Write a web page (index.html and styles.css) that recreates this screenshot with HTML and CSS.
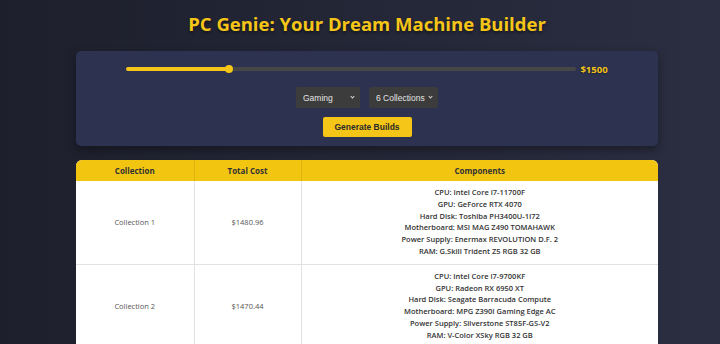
FILE: index.html
```html
<!DOCTYPE html>
<html lang="en">
<head>
  <meta charset="UTF-8">
  <title>PC Genie</title>
  <link rel="stylesheet" href="styles.css">
</head>
<body>

  <div class="wrap">
    <h1>PC Genie: Your Dream Machine Builder</h1>

    <div class="panel">
      <div class="budget-row">
        <input type="range" id="budget" min="500" max="5000" step="10" value="1500" style="background: linear-gradient(to right, #f5c518 22.8%, #474747 22.8%);">
        <span class="budget-value">$1500</span>
      </div>

      <div class="select-row">
        <label class="pick-box pick-purpose">
          <select id="purpose" class="pick">
            <option>Gaming</option>
            <option>Office</option>
            <option>Editing</option>
          </select>
        </label>
        <label class="pick-box pick-count">
          <select id="count" class="pick">
            <option>6 Collections</option>
            <option>3 Collections</option>
          </select>
        </label>
      </div>

      <button type="button" class="generate-btn">Generate Builds</button>
    </div>

    <table class="builds">
      <colgroup>
        <col class="col-name">
        <col class="col-cost">
        <col>
      </colgroup>
      <thead>
        <tr>
          <th>Collection</th>
          <th>Total Cost</th>
          <th>Components</th>
        </tr>
      </thead>
      <tbody>
        <tr>
          <td>Collection 1</td>
          <td>$1480.96</td>
          <td class="parts">
            <div>CPU: Intel Core i7-11700F</div>
            <div>GPU: GeForce RTX 4070</div>
            <div>Hard Disk: Toshiba PH3400U-1I72</div>
            <div>Motherboard: MSI MAG Z490 TOMAHAWK</div>
            <div>Power Supply: Enermax REVOLUTION D.F. 2</div>
            <div>RAM: G.Skill Trident Z5 RGB 32 GB</div>
          </td>
        </tr>
        <tr>
          <td>Collection 2</td>
          <td>$1470.44</td>
          <td class="parts">
            <div>CPU: Intel Core i7-9700KF</div>
            <div>GPU: Radeon RX 6950 XT</div>
            <div>Hard Disk: Seagate Barracuda Compute</div>
            <div>Motherboard: MPG Z390I Gaming Edge AC</div>
            <div>Power Supply: Silverstone ST85F-GS-V2</div>
            <div>RAM: V-Color XSky RGB 32 GB</div>
          </td>
        </tr>
      </tbody>
    </table>
  </div>

</body>
</html>
```

FILE: styles.css
```css
body {
  font-family: 'Open Sans', 'Noto Sans', sans-serif;
  background: linear-gradient(to right, #1d1f2c, #2b2e41);
  margin: 0;
  padding: 12px 0 0;
  min-height: 100vh;
  overflow: hidden;
}

.wrap {
  width: 582px;
  margin-left: 76px;
}

h1 {
  text-align: center;
  color: #f5c518;
  font-size: 18.5px;
  line-height: 24px;
  font-weight: 700;
  margin: 0 0 15px;
  text-shadow: 0 2px 3px rgba(0,0,0,0.45);
}

.panel {
  background-color: #2d3250;
  border-radius: 5px;
  box-shadow: 0 4px 10px rgba(0,0,0,0.35);
  padding: 13px 0 9px;
  display: flex;
  flex-direction: column;
  align-items: center;
}

.budget-row {
  display: flex;
  align-items: center;
  gap: 4px;
  height: 10px;
}

input[type="range"] {
  -webkit-appearance: none;
  appearance: none;
  width: 450px;
  height: 4px;
  margin: 0;
  border-radius: 2px;
  outline: none;
}

input[type="range"]::-webkit-slider-thumb {
  -webkit-appearance: none;
  width: 8px;
  height: 8px;
  border-radius: 50%;
  background: #f5c518;
  cursor: pointer;
}

.budget-value {
  color: #f5c518;
  font-weight: 700;
  font-size: 9.5px;
  text-shadow: 0 1px 2px rgba(0,0,0,0.4);
}

.select-row {
  display: flex;
  gap: 9px;
  margin-top: 13px;
}

.pick-box {
  position: relative;
  display: block;
  height: 21px;
}

.pick-box::after {
  content: "";
  position: absolute;
  right: 6px;
  top: 8px;
  width: 2px;
  height: 2px;
  border-right: 1px solid #d8d8d8;
  border-bottom: 1px solid #d8d8d8;
  transform: rotate(45deg);
  pointer-events: none;
}

.pick-purpose {
  width: 64px;
}

.pick-count {
  width: 69px;
}

.pick {
  -webkit-appearance: none;
  appearance: none;
  display: block;
  width: 100%;
  height: 21px;
  margin: 0;
  background-color: #3c3c3c;
  color: #e4e4e4;
  border: none;
  border-radius: 2px;
  font-family: 'Liberation Sans', Arial, sans-serif;
  font-size: 8.5px;
  padding: 0 0 0 7px;
  outline: none;
}

.generate-btn {
  margin-top: 9px;
  width: 89px;
  height: 20px;
  background-color: #f5c518;
  color: #2a2a2a;
  border: none;
  border-radius: 2px;
  font-family: 'Liberation Sans', Arial, sans-serif;
  font-weight: 700;
  font-size: 8.5px;
  cursor: pointer;
}

.generate-btn:hover {
  background-color: #e6b800;
}

.builds {
  width: 100%;
  margin-top: 14px;
  border-collapse: collapse;
  table-layout: fixed;
  background-color: #ffffff;
  border-radius: 6px 6px 0 0;
  overflow: hidden;
  font-size: 7.5px;
}

.col-name {
  width: 118px;
}

.col-cost {
  width: 107px;
}

th, td {
  text-align: center;
  border-right: 1px solid #e2e2e2;
  border-bottom: 1px solid #e2e2e2;
}

th:last-child, td:last-child {
  border-right: none;
}

th {
  background-color: #f2c511;
  color: #333;
  font-weight: 700;
  font-size: 8px;
  height: 21px;
  padding: 0;
  border-right-color: #e0b20f;
  border-bottom: none;
}

td {
  color: #555;
  padding: 6px 0;
}

.parts {
  color: #333;
  font-weight: 600;
  line-height: 11.8px;
}
```
